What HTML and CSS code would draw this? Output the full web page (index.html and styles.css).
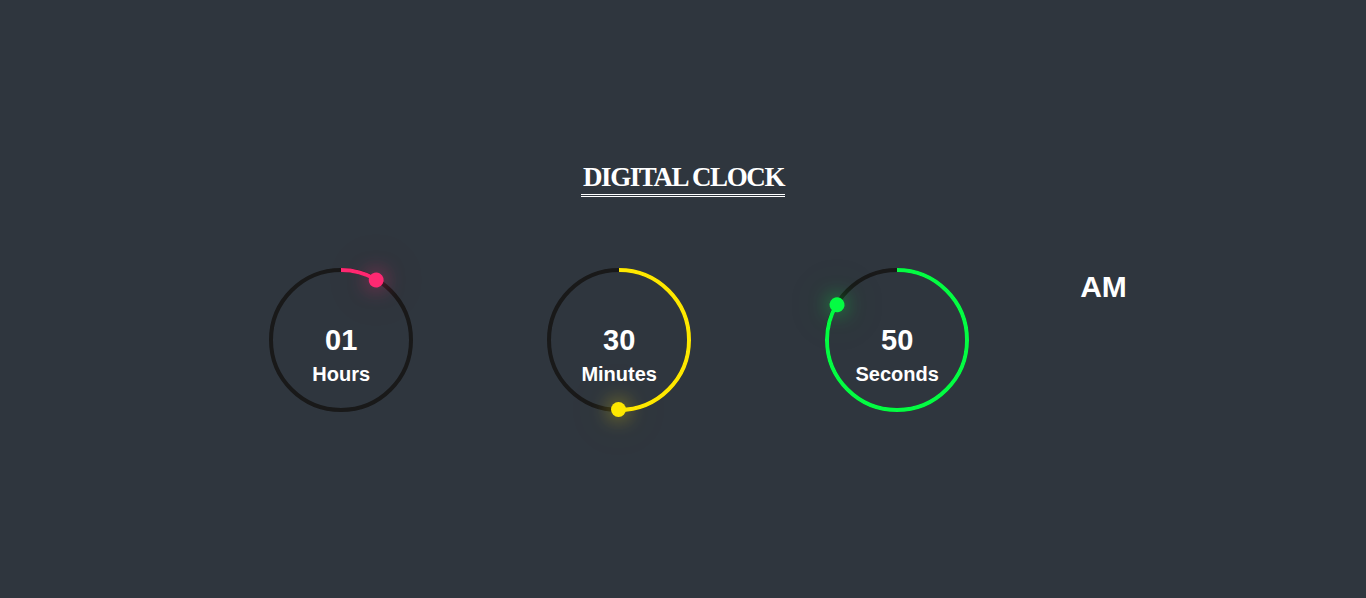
FILE: index.html
```html
<!DOCTYPE html>
<html lang="en">
<head>
<meta charset="utf-8">
<title>Digital Clock</title>
<link rel="stylesheet" href="styles.css">
</head>
<body>
<main class="page">
  <h1 class="title">DIGITAL CLOCK</h1>
  <div class="clock">
    <div class="unit hours">
      <svg class="ring" width="150" height="150" viewBox="0 0 150 150">
        <circle class="track" cx="75" cy="75" r="70"></circle>
        <circle class="arc" cx="75" cy="75" r="70" style="stroke-dashoffset: 403.2"></circle>
      </svg>
      <span class="dot" style="transform: rotate(30deg)"></span>
      <div class="text"><span class="num">01</span><span class="label">Hours</span></div>
    </div>
    <div class="unit minutes">
      <svg class="ring" width="150" height="150" viewBox="0 0 150 150">
        <circle class="track" cx="75" cy="75" r="70"></circle>
        <circle class="arc" cx="75" cy="75" r="70" style="stroke-dashoffset: 219.9"></circle>
      </svg>
      <span class="dot" style="transform: rotate(180deg)"></span>
      <div class="text"><span class="num">30</span><span class="label">Minutes</span></div>
    </div>
    <div class="unit seconds">
      <svg class="ring" width="150" height="150" viewBox="0 0 150 150">
        <circle class="track" cx="75" cy="75" r="70"></circle>
        <circle class="arc" cx="75" cy="75" r="70" style="stroke-dashoffset: 73.3"></circle>
      </svg>
      <span class="dot" style="transform: rotate(300deg)"></span>
      <div class="text"><span class="num">50</span><span class="label">Seconds</span></div>
    </div>
    <div class="ampm">AM</div>
  </div>
</main>
</body>
</html>
```
FILE: styles.css
```css
* { box-sizing: border-box; }
html, body { margin: 0; padding: 0; }
body {
  background: #2f363e;
  color: #fff;
  font-family: "Liberation Sans", Arial, sans-serif;
  height: 598px;
  overflow: hidden;
}
.page {
  display: flex;
  flex-direction: column;
  align-items: center;
  padding-top: 161px;
}
.title {
  margin: 0 0 68px 0;
  font-family: "Liberation Serif", "Times New Roman", serif;
  font-weight: bold;
  font-size: 27px;
  line-height: 30px;
  letter-spacing: -1.4px;
  padding: 1px 1px 2px 2px;
  border-bottom: 3px double #fff;
  color: #fff;
}
.clock {
  display: flex;
  align-items: flex-start;
  padding-left: 27px;
}
.unit {
  position: relative;
  width: 150px;
  height: 150px;
  display: grid;
  justify-items: center;
  margin-right: 128px;
}
.unit.seconds { margin-right: 108px; }
.hours { --clr: #ff2972; }
.minutes { --clr: #fee800; }
.seconds { --clr: #04fc43; }
.ring {
  grid-area: 1 / 1;
  display: block;
  transform: rotate(-90deg);
}
.track, .arc {
  fill: none;
  stroke-width: 4;
}
.track { stroke: #191919; }
.arc {
  stroke: var(--clr);
  stroke-dasharray: 439.8;
}
.dot {
  position: absolute;
  left: 0;
  top: 0;
  width: 150px;
  height: 150px;
}
.dot::before {
  content: "";
  position: absolute;
  left: 67.5px;
  top: -2.5px;
  width: 15px;
  height: 15px;
  border-radius: 50%;
  background: var(--clr);
  box-shadow: 0 0 20px color-mix(in srgb, var(--clr) 70%, transparent), 0 0 60px color-mix(in srgb, var(--clr) 25%, transparent);
}
.text {
  grid-area: 1 / 1;
  align-self: start;
  margin-top: 59px;
  display: flex;
  flex-direction: column;
  align-items: center;
  position: relative;
  z-index: 1;
}
.num {
  font-weight: bold;
  font-size: 29px;
  line-height: 33px;
}
.label {
  font-weight: bold;
  font-size: 20px;
  line-height: 23px;
  margin-top: 6px;
}
.ampm {
  margin-top: 5px;
  font-weight: bold;
  font-size: 30px;
  line-height: 34px;
}
```
